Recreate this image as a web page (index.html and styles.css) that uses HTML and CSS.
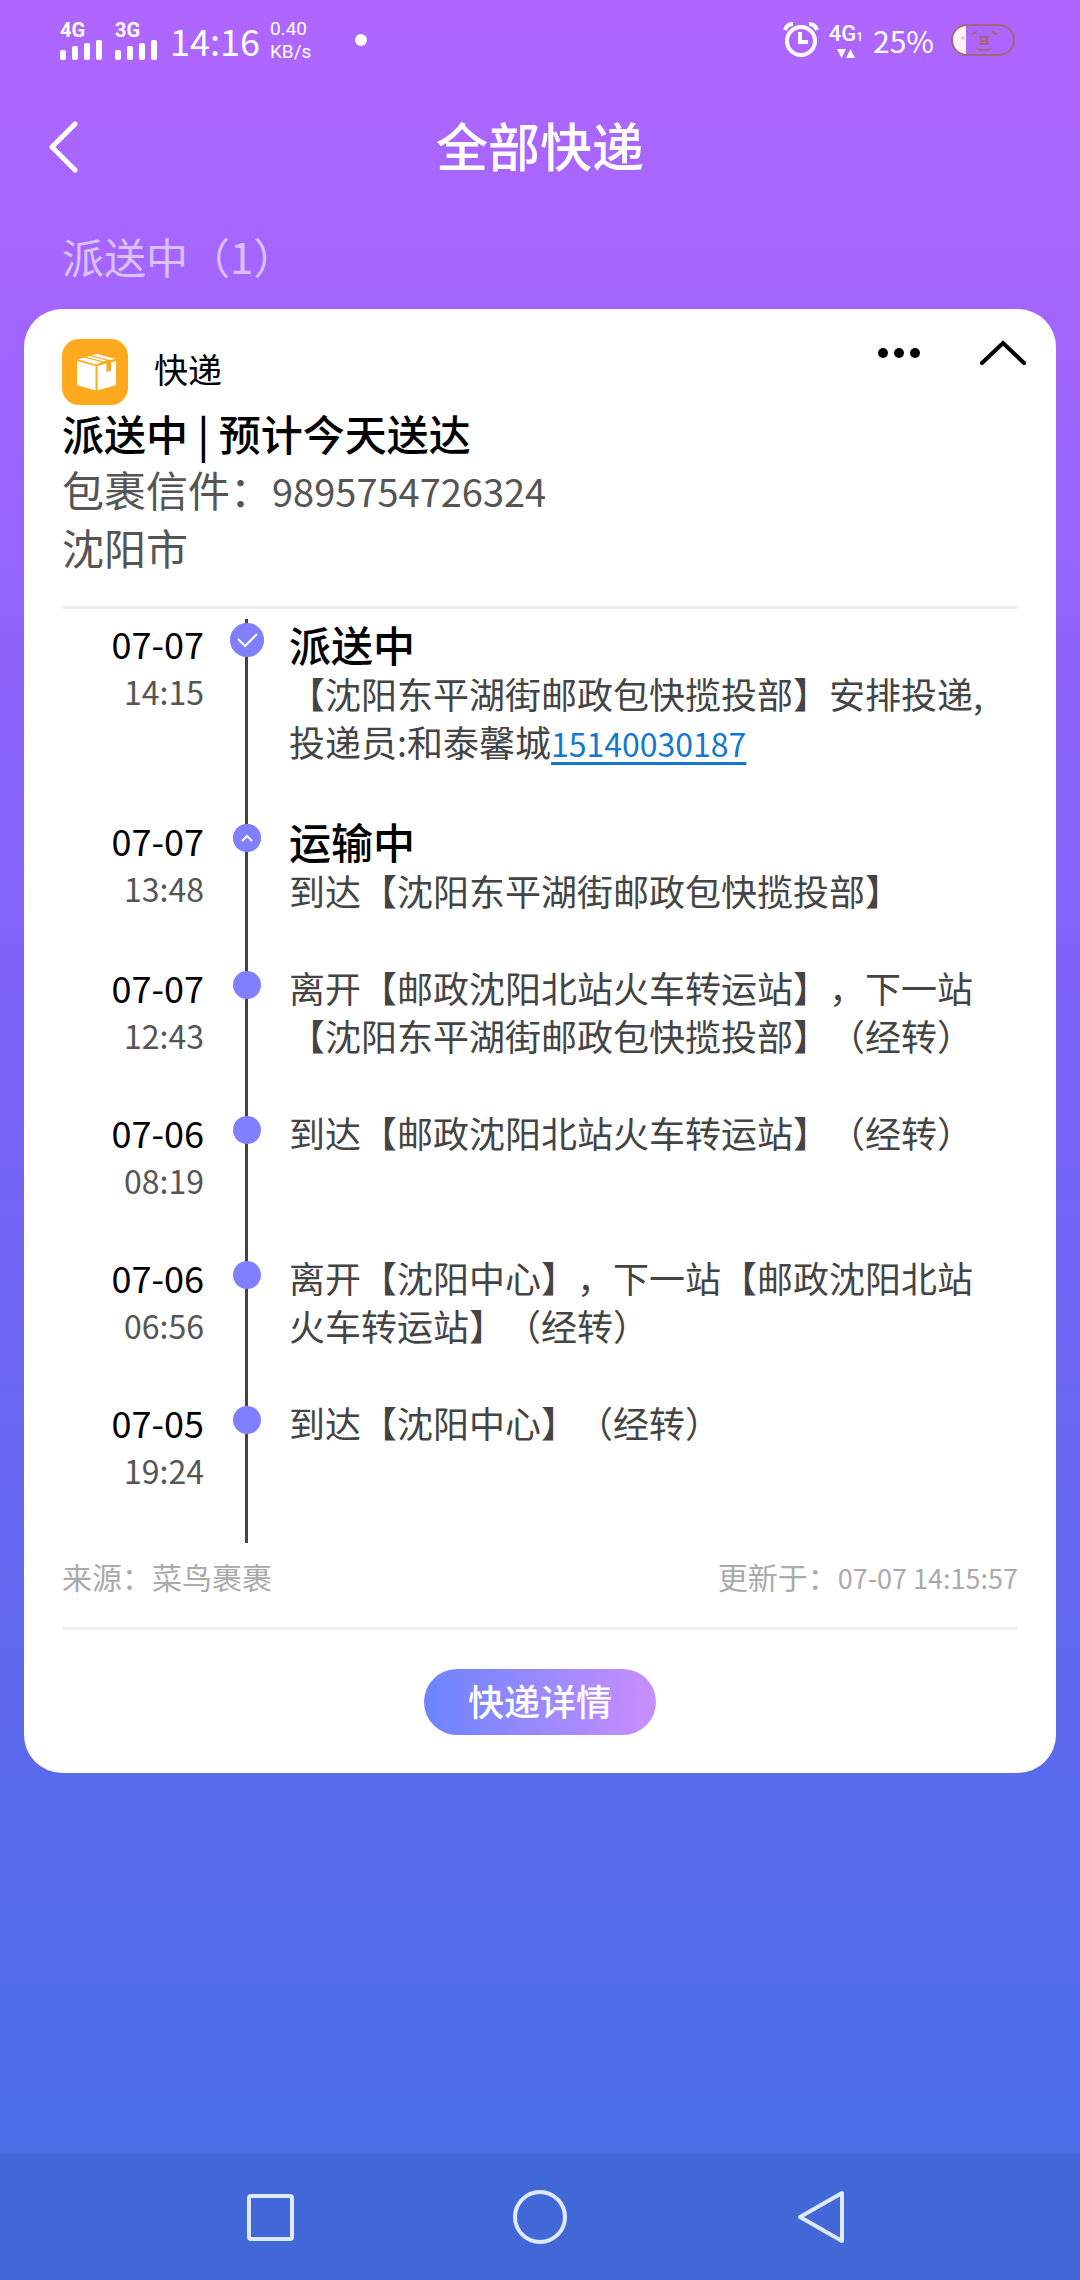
FILE: index.html
```html
<!DOCTYPE html>
<html lang="zh-CN">
<head>
  <meta charset="UTF-8">
  <meta name="viewport" content="width=device-width, initial-scale=1.0">
  <title>全部快递</title>
  <link rel="stylesheet" href="styles.css">
</head>
<body>
  <div class="status-bar">
    <div class="status-left">
      <div class="signal">
        <span class="network">4G</span>
        <svg width="42" height="20" viewBox="0 0 42 20" fill="#fff">
          <rect x="0" y="10" width="6" height="10" rx="2"/>
          <rect x="12" y="6" width="6" height="14" rx="2"/>
          <rect x="24" y="3" width="6" height="17" rx="2"/>
          <rect x="36" y="0" width="6" height="20" rx="2"/>
        </svg>
      </div>
      <div class="signal">
        <span class="network">3G</span>
        <svg width="42" height="20" viewBox="0 0 42 20" fill="#fff">
          <rect x="0" y="10" width="6" height="10" rx="2"/>
          <rect x="12" y="6" width="6" height="14" rx="2"/>
          <rect x="24" y="3" width="6" height="17" rx="2"/>
          <rect x="36" y="0" width="6" height="20" rx="2"/>
        </svg>
      </div>
      <span class="clock">14:16</span>
      <div class="speed"><span>0.40</span><span>KB/s</span></div>
      <span class="notice-dot"></span>
    </div>
    <div class="status-right">
      <svg width="36" height="36" viewBox="0 0 36 36" fill="none" stroke="#fff">
        <circle cx="18" cy="19" r="14" stroke-width="4"/>
        <path d="M17 10v10h8" stroke-width="4"/>
        <path d="M2 8Q4 2 10 2M34 8Q32 2 26 2" stroke-width="4"/>
      </svg>
      <div class="data">
        <span class="data-type">4G<small>1</small></span>
        <svg width="18" height="9" viewBox="0 0 18 9" fill="#fff">
          <path d="M0 0h9L4.500 9zM9 9h9L13.500 0z"/>
        </svg>
      </div>
      <span class="percent">25%</span>
      <svg width="66" height="32" viewBox="0 0 66 32" fill="none" stroke="#a5657f" stroke-width="2">
        <path d="M16 2h0A14 14 0 0 0 16 30z" fill="#fff4f4" stroke="none"/>
        <rect x="2" y="1" width="62" height="30" rx="15"/>
        <circle cx="13" cy="14" r="2" fill="#f3c3cd" stroke="none"/>
        <path d="M22 10l5-2M42 8l5 2M29 13h10M30 13l2 4-3 3M38 13l-2 4 3 3M30 20h8M32 17h4M26 24q8 5 16 0"/>
      </svg>
    </div>
  </div>

  <header class="title-bar">
    <button class="back" aria-label="返回">
      <svg width="30" height="52" viewBox="0 0 30 52" fill="none" stroke="#fff" stroke-width="5" stroke-linecap="round" stroke-linejoin="round">
        <path d="M27 3L4 26l23 23"/>
      </svg>
    </button>
    <h1>全部快递</h1>
  </header>

  <main>
    <h2 class="group-title">派送中（1）</h2>

    <section class="card">
      <div class="card-header">
        <svg width="66" height="66" viewBox="0 0 66 66">
          <rect width="66" height="66" rx="17" fill="#ffa91f"/>
          <g fill="#fff">
            <path d="M15 22l18.500 5v24.500L15 46z"/>
            <path d="M35.500 27l9-2.400v8.900l2-1.500 2.500.500v-9l5-1.500V46l-18.500 5.500z"/>
            <path d="M16 20.500l6.500-2 17 4.500-5.500 2.500z"/>
            <path d="M24.500 17.800l3-.800 17 4.500-3 .900z"/>
            <path d="M29.500 16.500L35 15l18.500 5-6 1z"/>
          </g>
        </svg>
        <span class="card-name">快递</span>
        <div class="card-actions">
          <button aria-label="更多">
            <svg width="42" height="26" viewBox="0 0 42 26">
              <circle cx="5" cy="14" r="5"/><circle cx="21" cy="14" r="5"/><circle cx="37" cy="14" r="5"/>
            </svg>
          </button>
          <button aria-label="收起">
            <svg width="46" height="26" viewBox="0 0 46 26" fill="none" stroke="#000" stroke-width="4" stroke-linecap="round">
              <path d="M2 24L23 4l21 20"/>
            </svg>
          </button>
        </div>
      </div>

      <h3 class="summary">派送中 | 预计今天送达</h3>
      <p class="detail">包裹信件：<span class="number">9895754726324</span></p>
      <p class="detail">沈阳市</p>

      <ol class="timeline">
        <li>
          <div class="when"><span class="date">07-07</span><span class="time">14:15</span></div>
          <div class="marker current">
            <svg class="node" viewBox="0 0 34 34" fill="none" stroke="#fff" stroke-width="2">
              <circle cx="17" cy="17" r="17" fill="#8080ff" stroke="none"/>
              <path d="M8 16l7 7L27 11"/>
            </svg>
          </div>
          <div class="event">
            <h4>派送中</h4>
            <p>【沈阳东平湖街邮政包快揽投部】安排投递,投递员:和泰馨城<a href="tel:15140030187">15140030187</a></p>
          </div>
        </li>
        <li>
          <div class="when"><span class="date">07-07</span><span class="time">13:48</span></div>
          <div class="marker">
            <svg class="node" viewBox="0 0 28 28" fill="none" stroke="#fff" stroke-width="2">
              <circle cx="14" cy="14" r="14" fill="#8080ff" stroke="none"/>
              <path d="M9 17l5-5 5 5"/>
            </svg>
          </div>
          <div class="event">
            <h4>运输中</h4>
            <p>到达【沈阳东平湖街邮政包快揽投部】</p>
          </div>
        </li>
        <li>
          <div class="when"><span class="date">07-07</span><span class="time">12:43</span></div>
          <div class="marker"><span class="node"></span></div>
          <div class="event">
            <p>离开【邮政沈阳北站火车转运站】，下一站【沈阳东平湖街邮政包快揽投部】（经转）</p>
          </div>
        </li>
        <li>
          <div class="when"><span class="date">07-06</span><span class="time">08:19</span></div>
          <div class="marker"><span class="node"></span></div>
          <div class="event">
            <p>到达【邮政沈阳北站火车转运站】（经转）</p>
          </div>
        </li>
        <li>
          <div class="when"><span class="date">07-06</span><span class="time">06:56</span></div>
          <div class="marker"><span class="node"></span></div>
          <div class="event">
            <p>离开【沈阳中心】，下一站【邮政沈阳北站火车转运站】（经转）</p>
          </div>
        </li>
        <li>
          <div class="when"><span class="date">07-05</span><span class="time">19:24</span></div>
          <div class="marker"><span class="node"></span></div>
          <div class="event">
            <p>到达【沈阳中心】（经转）</p>
          </div>
        </li>
      </ol>

      <div class="source">
        <span>来源：菜鸟裹裹</span>
        <span>更新于：<span class="updated">07-07 14:15:57</span></span>
      </div>

      <div class="card-footer">
        <button class="detail-button">快递详情</button>
      </div>
    </section>
  </main>

  <nav class="nav-bar">
    <button aria-label="最近任务">
      <svg width="54" height="54" viewBox="0 0 54 54"><rect x="6" y="6" width="43" height="43" rx="2"/></svg>
    </button>
    <button aria-label="主屏幕">
      <svg width="54" height="54" viewBox="0 0 54 54"><circle cx="27" cy="27" r="25"/></svg>
    </button>
    <button aria-label="返回上一级">
      <svg width="78" height="54" viewBox="0 0 78 54"><path d="M71 3v48L29 27z"/></svg>
    </button>
  </nav>
</body>
</html>
```
FILE: styles.css
```css
* {
  margin: 0;
  padding: 0;
  box-sizing: border-box;
}
body {
  min-height: 100vh;
  display: flex;
  flex-direction: column;
  background: linear-gradient(#af66ff 0%, #a366ff 13%, #7b63f8 45%, #5a6aec 78%, #4a6de8 94%);
  font-family: "Noto Sans CJK SC", sans-serif;
  text-spacing-trim: space-all;
  color: #000;
}
button {
  background: none;
  border: none;
  font-family: inherit;
  color: inherit;
}
svg {
  display: block;
}
/* 状态栏 */
.status-bar {
  height: 80px;
  padding: 0 64px 0 60px;
  display: flex;
  align-items: center;
  justify-content: space-between;
  color: #fff;
}
.status-left,
.status-right {
  display: flex;
  align-items: center;
}
.signal {
  display: flex;
  flex-direction: column;
  margin-right: 13px;
}
.network {
  font-family: Roboto, sans-serif;
  font-size: 20px;
  font-weight: bold;
  line-height: 20px;
}
.clock {
  font-size: 36px;
}
.speed {
  display: flex;
  flex-direction: column;
  margin-left: 10px;
  font-family: Roboto, sans-serif;
  font-size: 19px;
  line-height: 23px;
}
.notice-dot {
  width: 12px;
  height: 12px;
  margin-left: 44px;
  border-radius: 50%;
  background-color: #fff;
}
.data {
  display: flex;
  flex-direction: column;
  align-items: center;
  margin: 0 10px;
}
.data-type {
  font-family: Roboto, sans-serif;
  font-size: 22px;
  font-weight: 500;
  line-height: 24px;
}
.data-type small {
  font-size: 12px;
}
.percent {
  font-size: 30px;
  margin-right: 16px;
}
/* 标题栏 */
.title-bar {
  height: 134px;
  padding: 0 48px;
  display: grid;
  grid-template-columns: 1fr auto 1fr;
  align-items: center;
  color: #fff;
}
.back {
  justify-self: start;
}
.title-bar h1 {
  padding-bottom: 6px;
  font-size: 52px;
  font-weight: 500;
}
main {
  flex: 1;
  padding: 0 24px;
}
.group-title {
  padding: 0 38px 12px;
  font-size: 42px;
  font-weight: 400;
  line-height: 83px;
  color: rgba(255, 255, 255, 0.6);
}
.card {
  padding: 30px 38px 38px;
  border-radius: 38px;
  background-color: #fff;
}
.card-header {
  display: flex;
  align-items: center;
}
.card-name {
  margin-left: 26px;
  padding-bottom: 6px;
  font-size: 34px;
  line-height: 50px;
}
.card-actions {
  display: flex;
  align-self: flex-start;
  gap: 68px;
  margin-left: auto;
}
.card-actions button {
  margin-right: -8px;
}
.summary,
.detail {
  font-size: 42px;
  font-weight: 400;
  line-height: 56px;
}
.summary {
  font-weight: 500;
}
.detail {
  color: #555;
}
.number {
  font-size: 38px;
}
/* 物流轨迹 */
.timeline {
  margin-top: 31px;
  padding-top: 10px;
  border-top: 3px solid #eee;
  list-style: none;
}
.timeline li {
  display: grid;
  grid-template-columns: 142px 85px 1fr;
}
.when {
  display: flex;
  flex-direction: column;
  padding-bottom: 49px;
  text-align: right;
  line-height: 48px;
}
.date {
  font-size: 36px;
}
.time {
  font-size: 32px;
  color: #555;
}
.marker {
  display: flex;
  justify-content: center;
  align-items: flex-start;
  padding-top: 8px;
  background: linear-gradient(#444, #444) center / 3px 100% no-repeat;
}
.node {
  width: 28px;
  height: 28px;
  border-radius: 50%;
  background-color: #8080ff;
}
.current {
  padding-top: 4px;
}
.current .node {
  width: 34px;
  height: 34px;
}
.event {
  padding: 0 20px 49px 0;
  font-size: 36px;
  line-height: 48px;
  color: #444;
}
.event h4 {
  font-size: 42px;
  font-weight: 500;
  line-height: 50px;
  color: #000;
}
.event a {
  font-size: 32px;
  color: #1478d2;
  text-underline-offset: 5px;
}
.source {
  display: flex;
  justify-content: space-between;
  padding: 10px 0 26px;
  border-bottom: 3px solid #eee;
  font-size: 30px;
  line-height: 46px;
  color: #aaa;
}
.updated {
  font-size: 27px;
}
.card-footer {
  padding-top: 39px;
  text-align: center;
}
.detail-button {
  height: 66px;
  padding: 0 44px 4px;
  border-radius: 33px;
  background: linear-gradient(90deg, #6b84ff, #c98eff);
  font-size: 36px;
  font-weight: 500;
  line-height: 60px;
  color: #fff;
}
/* 导航栏 */
.nav-bar {
  height: 127px;
  padding: 0 135px;
  display: grid;
  grid-template-columns: repeat(3, 1fr);
  place-items: center;
  background-color: #4267d6;
}
.nav-bar svg {
  fill: none;
  stroke: #e0eaff;
  stroke-width: 4;
  stroke-linejoin: round;
}
```
